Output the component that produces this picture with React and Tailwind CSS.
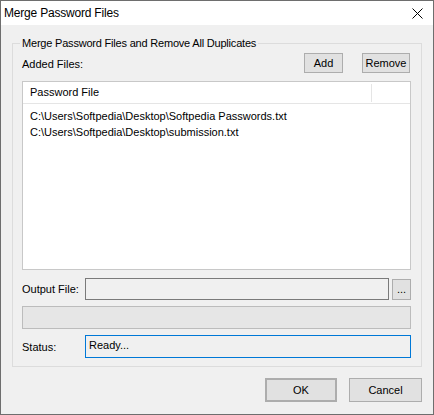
const font = { fontFamily: '"Liberation Sans", Arial, sans-serif' }

const Button = ({ children, className }) => (
  <button
    type="button"
    className={`flex items-center justify-center bg-[#e1e1e1] border border-[#adadad] text-[11px] text-black leading-none ${className}`}
  >
    {children}
  </button>
)

export default function App() {
  return (
    <div
      className="w-[434px] h-[415px] border border-[#6e6e6e] bg-[#f0f0f0] flex flex-col text-black"
      style={font}
    >
      <div className="h-[24px] bg-white flex items-center justify-between pl-[3px] pr-[10px] shrink-0">
        <span className="text-[12px] leading-none tracking-[-0.2px]">Merge Password Files</span>
        <svg width="11" height="11" viewBox="0 0 11 11" className="mt-[1px]">
          <path d="M0.5 0.5 L10.5 10.5 M10.5 0.5 L0.5 10.5" stroke="#000" strokeWidth="1" />
        </svg>
      </div>

      <div className="flex-1 flex flex-col px-[11px] pt-[18px]">
        <div className="relative border border-[#dcdcdc] h-[324px] pl-[9px] pr-[10px] pt-[9px] flex flex-col">
          <span className="absolute left-[7px] top-[-8px] bg-[#f0f0f0] px-[2px] text-[11px] leading-[14px] tracking-[-0.2px]">
            Merge Password Files and Remove All Duplicates
          </span>

          <div className="flex items-center h-[20px]">
            <span className="text-[11px] flex-1 mt-[2px]">Added Files:</span>
            <Button className="w-[39px] h-[20px]">Add</Button>
            <Button className="w-[48px] h-[20px] ml-[19px] mr-[1px]">Remove</Button>
          </div>

          <div className="mt-[8px] h-[189px] bg-white border border-[#c8c8c8] flex flex-col">
            <div className="h-[22px] flex border-b border-[#e5e5e5] text-[11px] items-center">
              <span className="pl-[7px] flex-1">Password File</span>
              <span className="w-[1px] h-[18px] bg-[#e5e5e5] mr-[38px]" />
            </div>
            <div className="pl-[7px] pt-[4px] text-[11px] flex flex-col">
              <span className="h-[16px] leading-[16px]">C:\Users\Softpedia\Desktop\Softpedia Passwords.txt</span>
              <span className="h-[16px] leading-[16px]">C:\Users\Softpedia\Desktop\submission.txt</span>
            </div>
          </div>

          <div className="mt-[8px] flex items-center h-[22px]">
            <span className="w-[63px] text-[11px]">Output File:</span>
            <div className="w-[304px] h-[22px] border border-[#7a7a7a] bg-[#f0f0f0]" />
            <Button className="w-[19px] h-[21px] ml-[3px] text-[#333]">...</Button>
          </div>

          <div className="mt-[6px] h-[23px] bg-[#e6e6e6] border border-[#bcbcbc]" />

          <div className="mt-[6px] flex items-center h-[23px]">
            <span className="w-[63px] text-[11px] mt-[2px]">Status:</span>
            <div className="flex-1 h-[23px] border border-[#0078d7] bg-[#f0f0f0] pl-[3px] pt-[3px] text-[11px] leading-[13px]">
              Ready...
            </div>
          </div>
        </div>

        <div className="flex justify-end mt-[11px]">
          <Button className="w-[72px] h-[24px] border-2 border-[#0078d7]">OK</Button>
          <Button className="w-[73px] h-[24px] ml-[12px]">Cancel</Button>
        </div>
      </div>
    </div>
  )
}
